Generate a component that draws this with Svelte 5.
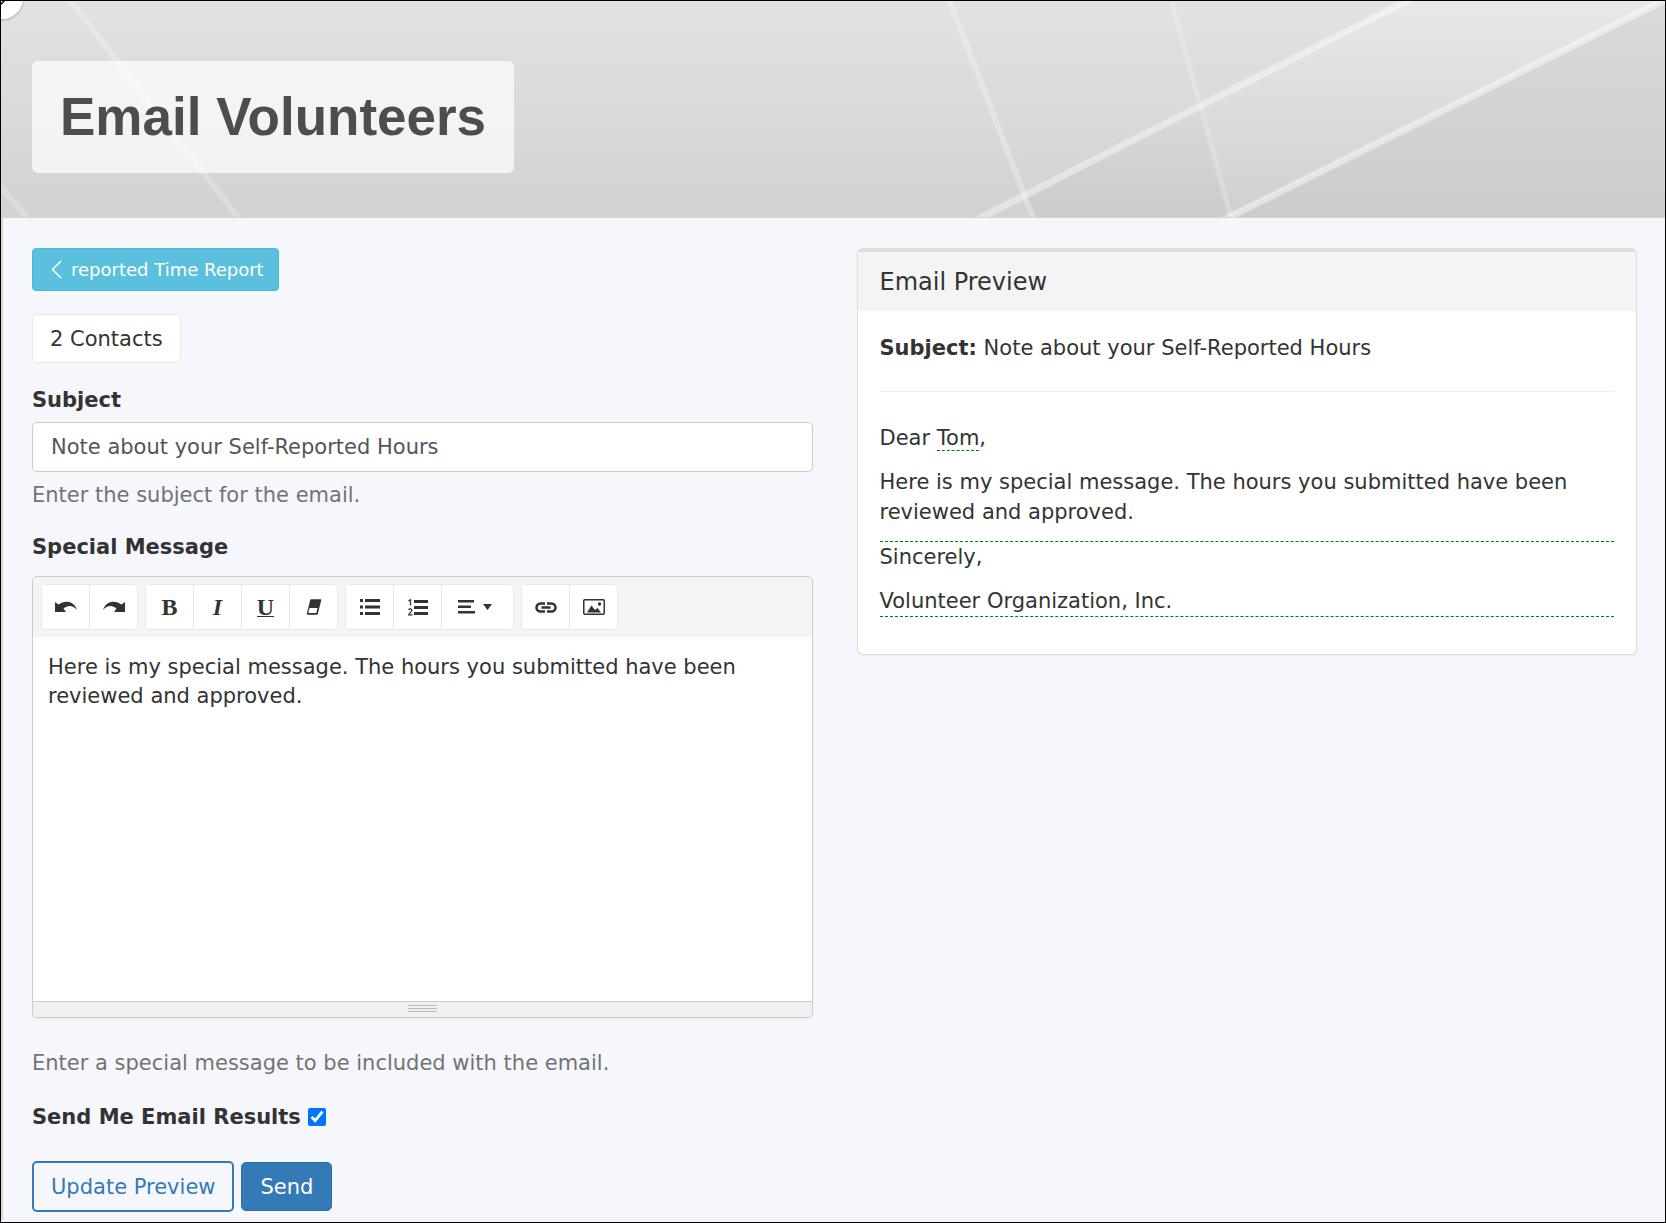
<script>
  let subject = $state('Note about your Self-Reported Hours');
  let sendResults = $state(true);
  const message = 'Here is my special message. The hours you submitted have been reviewed and approved.';
</script>

<div class="page">
  <header class="banner">
    <svg class="backdrop" viewBox="0 0 1666 217" preserveAspectRatio="none" aria-hidden="true">
      <defs>
        <linearGradient id="base" x1="0" y1="0" x2="0" y2="1">
          <stop offset="0" stop-color="#e2e2e2" /><stop offset="1" stop-color="#d2d2d2" />
        </linearGradient>
        <linearGradient id="band" x1="0" y1="0" x2="0" y2="1">
          <stop offset="0" stop-color="#e8e8e8" /><stop offset="1" stop-color="#d0d0d0" />
        </linearGradient>
        <linearGradient id="corner" x1="0" y1="0" x2="0" y2="1">
          <stop offset="0" stop-color="#dadada" /><stop offset="1" stop-color="#cccccc" />
        </linearGradient>
        <linearGradient id="wedge" x1="0" y1="0" x2="0" y2="1">
          <stop offset="0" stop-color="#dadada" /><stop offset="1" stop-color="#cbcbcb" />
        </linearGradient>
      </defs>
      <rect width="1666" height="217" fill="url(#base)" />
      <path d="M1201 105L1405 0H1664L1230 217z" fill="url(#band)" />
      <path d="M1025 195L1201 105L1230 217H1033z" fill="url(#wedge)" />
      <path d="M1230 217L1664 0H1666V217z" fill="url(#corner)" />
      <g fill="none" stroke="#fff">
        <path d="M62 -10L245 227M-8 178L34 227" stroke-width="6" opacity=".22" />
        <path d="M946 -10L1037 227" stroke-width="6" opacity=".28" />
        <path d="M1169 -10L1234 227" stroke-width="5" opacity=".2" />
        <path d="M963 227L1426 -10" stroke-width="7" opacity=".4" />
        <path d="M1210 227L1684 -10" stroke-width="7" opacity=".45" />
      </g>
    </svg>
    <span class="knob"></span>
    <h1>Email Volunteers</h1>
  </header>

  <main>
    <section class="form">
      <a class="back" href="#report">
        <svg width="11" height="19" viewBox="0 0 11 19" aria-hidden="true"><path d="M10 1L1.500 9.500L10 18" fill="none" stroke="#fff" stroke-width="1.500" /></svg>
        reported Time Report
      </a>
      <button class="contacts" type="button">2 Contacts</button>

      <label class="label" for="subject">Subject</label>
      <input id="subject" class="text" type="text" bind:value={subject} />
      <p class="help">Enter the subject for the email.</p>

      <label class="label special" for="message">Special Message</label>
      <div class="editor">
        <div class="toolbar">
          <div class="group">
            <button type="button" aria-label="Undo"><svg width="24" height="12" viewBox="0 0 24 12"><path d="M1 1L4.500 3.500C10-.8 20-1 23 9C19 4 13.500 4 9.500 7.500L12 11H1z" fill="#333" /></svg></button>
            <button type="button" aria-label="Redo"><svg width="24" height="12" viewBox="0 0 24 12"><path d="M23 1L19.500 3.500C14-.8 4-1 1 9C5 4 10.500 4 14.500 7.500L12 11H23z" fill="#333" /></svg></button>
          </div>
          <div class="group">
            <button type="button" class="glyph" aria-label="Bold">B</button>
            <button type="button" class="glyph italic" aria-label="Italic">I</button>
            <button type="button" class="glyph" aria-label="Underline"><span class="under">U</span></button>
            <button type="button" aria-label="Clear formatting"><svg width="16" height="16" viewBox="0 0 16 16"><path d="M5 1H14.500L11 15H1.500z" fill="#333" stroke="#333" stroke-width="1.500" stroke-linejoin="round" /><path d="M3.500 9H11.600L10.300 14H2.300z" fill="#fff" /></svg></button>
          </div>
          <div class="group">
            <button type="button" aria-label="Bulleted list"><svg width="20" height="16" viewBox="0 0 20 16" fill="#333"><path d="M0 0h3v3H0zM0 6.500h3v3H0zM0 13h3v3H0zM5 0h15v3H5zM5 6.500h15v3H5zM5 13h15v3H5z" /></svg></button>
            <button type="button" aria-label="Numbered list"><svg width="20" height="17" viewBox="0 0 20 17" fill="#333"><path d="M6 1h14v3H6zM6 7h14v3H6zM6 13h14v3H6z" /><path d="M.5 1.800L2.500.8V6.500M.5 10.800C1.200 9.300 4 9.500 3.700 11.500C3.500 13 1.500 14 .8 15.800H4.500" fill="none" stroke="#333" stroke-width="1.300" /></svg></button>
            <button type="button" class="wide" aria-label="Paragraph"><svg width="39" height="14" viewBox="0 0 39 14" fill="#333"><path d="M0 0h16v2.500H0zM0 5.500h13v2.500H0zM0 11h17v2.500H0zM25 4h9l-4.500 6z" /></svg></button>
          </div>
          <div class="group">
            <button type="button" aria-label="Link"><svg width="22" height="11" viewBox="0 0 22 11"><path d="M10 1.500H5.500a4 4 0 0 0 0 8H10M12 1.500h4.500a4 4 0 0 1 0 8H12M6.500 5.500h9" fill="none" stroke="#333" stroke-width="2.500" /></svg></button>
            <button type="button" aria-label="Picture"><svg width="22" height="16" viewBox="0 0 22 16"><rect x=".75" y=".75" width="20.500" height="14.500" rx="1" fill="none" stroke="#333" stroke-width="1.500" /><path d="M4 13.500L8.500 6.500L12 11L14.500 9L18 13.500z" fill="#333" /><circle cx="16.500" cy="5" r="1.700" fill="#333" /></svg></button>
          </div>
        </div>
        <textarea id="message" value={message}></textarea>
        <div class="status"><span></span><span></span><span></span></div>
      </div>
      <p class="help after">Enter a special message to be included with the email.</p>

      <label class="check">Send Me Email Results <input type="checkbox" bind:checked={sendResults} /></label>

      <div class="actions">
        <button class="update" type="button">Update Preview</button>
        <button class="send" type="button">Send</button>
      </div>
    </section>

    <section class="panel">
      <h2>Email Preview</h2>
      <div class="body">
        <p><strong>Subject:</strong> {subject}</p>
        <hr />
        <p>Dear <span class="merge">Tom</span>,</p>
        <div class="block"><p>{message}</p></div>
        <p>Sincerely,</p>
        <div class="block">Volunteer Organization, Inc.</div>
      </div>
    </section>
  </main>
</div>

<style>
  :global(body) { background: #f6f7fc; }
  :global(*) { box-sizing: border-box; }
  .page {
    min-height: 100vh;
    border: 1px solid #000;
    background: #f6f7fc;
    color: #333;
    font: 21px/30px 'DejaVu Sans', Verdana, sans-serif;
  }
  .banner {
    position: relative;
    padding: 60px 31px 44px;
    border-bottom: 1px solid #cdd6de;
    overflow: hidden;
  }
  .backdrop { position: absolute; inset: 0; width: 100%; height: 100%; }
  .knob {
    position: absolute;
    left: -20px;
    top: -24px;
    width: 42px;
    height: 42px;
    border-radius: 50%;
    background: linear-gradient(135deg, #fff 54%, #333 55%, #333 57%, #fff 58%);
    box-shadow: 0 1px 3px #0004;
  }
  h1 {
    position: relative;
    width: fit-content;
    margin: 0;
    padding: 26px 28px;
    border-radius: 6px;
    background: rgba(255, 255, 255, .7);
    color: #4d4d4d;
    font: bold 53px/60px 'Liberation Sans', Arial, sans-serif;
  }
  main {
    display: grid;
    grid-template-columns: 1fr 1fr;
    gap: 44px;
    align-items: start;
    padding: 30px 28px 8px 29px;
    border-left: 2px solid #d9d4d6;
  }
  p { margin: 0; }
  button, input, textarea { font: inherit; color: inherit; margin: 0; }
  .form { display: flex; flex-direction: column; align-items: flex-start; }
  .back {
    display: flex;
    align-items: center;
    gap: 9px;
    height: 43px;
    padding: 0 14px 0 18px;
    border: 1px solid #46b8da;
    border-radius: 4px;
    background: #5bc0de;
    color: #fff;
    font-size: 18px;
    text-decoration: none;
  }
  .contacts {
    height: 49px;
    margin-top: 23px;
    padding: 0 17px;
    border: 1px solid #e8e8e8;
    border-radius: 5px;
    background: #fff;
  }
  .label { margin: 22px 0 7px; font-weight: bold; }
  .text {
    width: 100%;
    height: 50px;
    padding: 0 18px;
    border: 1px solid #ccc;
    border-radius: 5px;
    background: #fff;
    color: #555;
  }
  .help { margin-top: 8px; color: #737373; }
  .special { margin-bottom: 14px; }
  .editor {
    width: 100%;
    border: 1px solid #ccc;
    border-radius: 5px;
    background: #fff;
    box-shadow: 0 1px 2px #0001;
    overflow: hidden;
  }
  .toolbar { display: flex; gap: 7px; padding: 7px 8px; background: #f4f4f4; }
  .group {
    display: flex;
    border: 1px solid #e8e8e8;
    border-radius: 4px;
    background: #fff;
    overflow: hidden;
  }
  .group button {
    display: flex;
    align-items: center;
    justify-content: center;
    width: 48px;
    height: 44px;
    padding: 0;
    border: 0;
    border-right: 1px solid #e8e8e8;
    background: #fff;
  }
  .group button:last-child { width: 47px; border-right: 0; }
  .group button.wide:last-child { width: 71px; }
  .group .glyph { font: bold 24px/24px 'Liberation Serif', serif; }
  .group .italic { font-style: italic; }
  .under { border-bottom: 1px solid #333; line-height: 18px; }
  textarea {
    display: block;
    width: 100%;
    height: 364px;
    padding: 16px 15px;
    border: 0;
    outline: 0;
    resize: none;
    background: #fff;
    line-height: 29px;
  }
  .status {
    display: flex;
    flex-direction: column;
    align-items: center;
    gap: 2px;
    height: 16px;
    padding-top: 3px;
    border-top: 1px solid #ccc;
    background: #f0f0f0;
  }
  .status span { width: 29px; height: 1px; background: #bbb; }
  .after { margin-top: 30px; }
  .check { display: flex; align-items: center; gap: 7px; margin-top: 24px; font-weight: bold; }
  .check input { width: 18px; height: 18px; accent-color: #0075ff; }
  .actions { display: flex; align-items: center; gap: 7px; margin-top: 29px; }
  .update {
    height: 51px;
    padding: 0 17px;
    border: 2px solid #337ab7;
    border-radius: 5px;
    background: #f6f7fc;
    color: #337ab7;
  }
  .send {
    height: 49px;
    padding: 0 18px;
    border: 1px solid #2e6da4;
    border-radius: 5px;
    background: #337ab7;
    color: #fff;
  }
  .panel {
    border: 1px solid #ddd;
    border-top-width: 4px;
    border-radius: 6px;
    background: #fff;
    box-shadow: 0 1px 2px #0001;
  }
  h2 {
    margin: 0;
    padding: 15px 22px 14px;
    background: #f4f4f4;
    font-size: 24px;
    font-weight: normal;
    line-height: 30px;
  }
  .body { padding: 22px 22px 37px; }
  hr { margin: 28px 0 31px; border: 0; border-top: 1px solid #eee; }
  .body p { margin-bottom: 14px; }
  .merge, .block { border-bottom: 1px dashed green; }
</style>
